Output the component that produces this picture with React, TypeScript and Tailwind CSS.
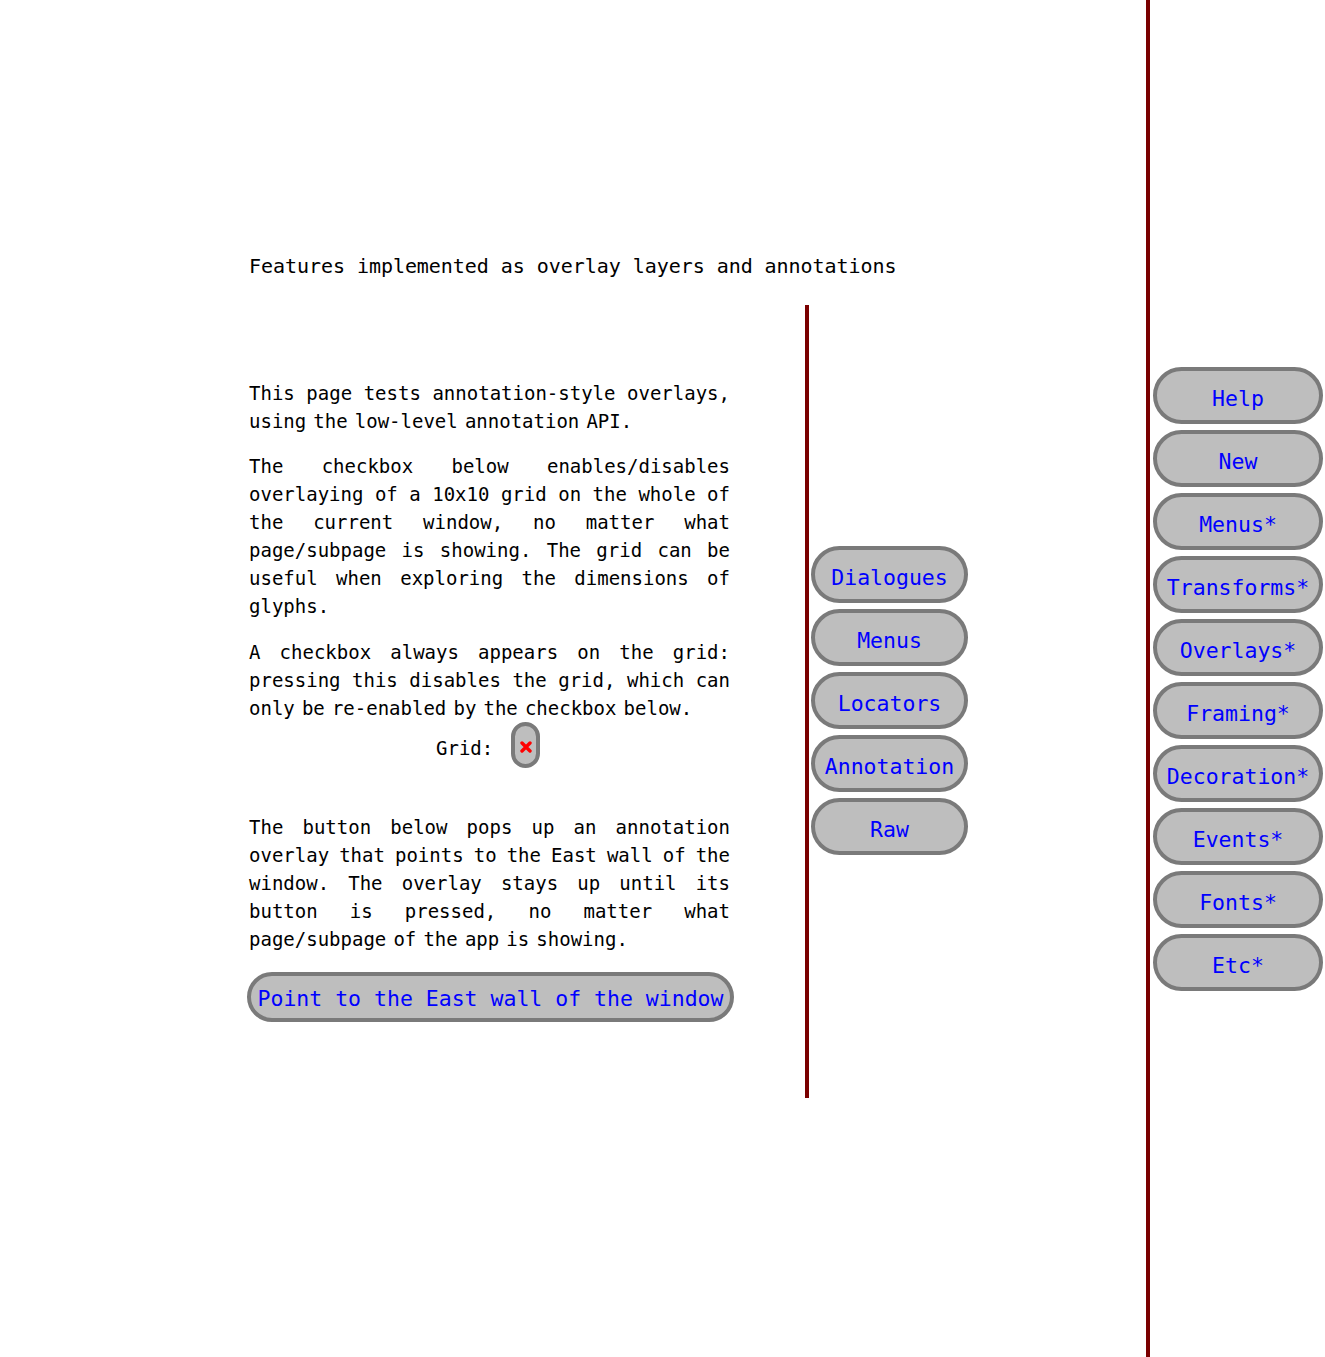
const mono = "font-['DejaVu_Sans_Mono',monospace]";

const midNav = ["Dialogues", "Menus", "Locators", "Annotation", "Raw"];
const sideNav = ["Help", "New", "Menus*", "Transforms*", "Overlays*", "Framing*", "Decoration*", "Events*", "Fonts*", "Etc*"];

function PillButton({ label, width }: { label: string; width: string }) {
  return (
    <button
      className={`${width} h-[57px] shrink-0 rounded-full border-[4px] border-[#7a7a7a] bg-[#bebebe] pt-[7px] text-center text-[21.5px] leading-none text-[#0000ff] ${mono}`}
    >
      {label}
    </button>
  );
}

function Para({ children, className = "" }: { children: React.ReactNode; className?: string }) {
  return (
    <p className={`text-justify text-[19px] leading-[28px] text-black [word-spacing:-4.3px] ${className}`}>
      {children}
    </p>
  );
}

export default function App() {
  return (
    <div className={`flex h-[1357px] w-[1325px] overflow-hidden bg-white ${mono}`}>
      <main className="flex w-[1146px] flex-col pt-[252px]">
        <h1 className="pl-[249px] text-[20px] leading-[28px] tracking-[-0.05px] text-black">
          Features implemented as overlay layers and annotations
        </h1>
        <div className="mt-[25px] flex h-[793px]">
          <div className="ml-[249px] flex w-[481px] flex-col justify-center pb-[2px]">
            <Para>This page tests annotation-style overlays, using the low-level annotation API.</Para>
            <Para className="mt-[17px]">
              The checkbox below enables/disables overlaying of a 10x10 grid on the whole of the current window, no
              matter what page/subpage is showing. The grid can be useful when exploring the dimensions of glyphs.
            </Para>
            <Para className="mt-[18px]">
              A checkbox always appears on the grid: pressing this disables the grid, which can only be re-enabled by
              the checkbox below.
            </Para>
            <div className="flex items-center pl-[187px]">
              <span className="pt-[6px] text-[19px] leading-[28px]">Grid:</span>
              <div className="ml-[18px] flex h-[46px] w-[29px] items-center justify-center rounded-full border-[4px] border-[#7a7a7a] bg-[#bebebe]">
                <svg width="12" height="12" viewBox="0 0 12 12" className="mt-[3px]">
                  <path d="M2 2 L10 10 M10 2 L2 10" stroke="#ff0000" strokeWidth="3.4" strokeLinecap="round" />
                </svg>
              </div>
            </div>
            <Para className="mt-[45px]">
              The button below pops up an annotation overlay that points to the East wall of the window. The overlay
              stays up until its button is pressed, no matter what page/subpage of the app is showing.
            </Para>
            <div className="mt-[19px] -ml-[2px]">
              <button
                className={`h-[50px] w-[487px] rounded-full border-[4px] border-[#7a7a7a] bg-[#bebebe] pt-[4px] text-center text-[21.5px] leading-none text-[#0000ff] ${mono}`}
              >
                Point to the East wall of the window
              </button>
            </div>
          </div>
          <div className="ml-[75px] w-[4px] bg-[#7a0000]" />
          <nav className="ml-[2px] flex flex-col justify-center gap-[6px] pb-[2px]">
            {midNav.map((n) => (
              <PillButton key={n} label={n} width="w-[157px]" />
            ))}
          </nav>
        </div>
      </main>
      <div className="w-[4px] bg-[#7a0000]" />
      <aside className="ml-[3px] flex flex-col justify-center gap-[6px]">
        {sideNav.map((n) => (
          <PillButton key={n} label={n} width="w-[170px]" />
        ))}
      </aside>
    </div>
  );
}
